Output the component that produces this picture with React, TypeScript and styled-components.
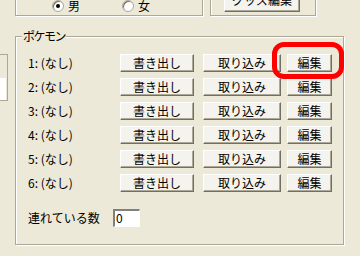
import React from "react";
import styled, { createGlobalStyle } from "styled-components";

const Global = createGlobalStyle`
  html, body { margin: 0; padding: 0; background: #ece9d8; }
  body { font-family: "Noto Sans CJK JP", "MS UI Gothic", sans-serif; font-size: 12px; color: #000; }
  * { box-sizing: border-box; }
`;

const Stage = styled.div`
  position: relative;
  width: 360px;
  height: 256px;
  overflow: hidden;
  background: #ece9d8;
`;

const etched = `
  border: 1px solid #aca899;
  box-shadow: inset 1px 1px 0 #fff, 1px 1px 0 #fff;
`;

const TopRow = styled.div`
  display: flex;
  margin-top: -21px;
  padding-left: 15px;
  gap: 7px;
`;

const TopBox = styled.div<{ $w: number; $pl: number }>`
  ${etched}
  width: ${(p) => p.$w}px;
  height: 37px;
  display: flex;
  align-items: flex-end;
  padding: 0 0 3px ${(p) => p.$pl}px;
`;

const RadioItem = styled.label<{ $ml?: number }>`
  display: flex;
  align-items: center;
  height: 12px;
  margin-left: ${(p) => p.$ml ?? 0}px;
  line-height: 12px;
`;

const RadioCircle = styled.span<{ $on?: boolean }>`
  position: relative;
  width: 12px;
  height: 12px;
  border-radius: 50%;
  background: #fff;
  border: 1px solid #aca899;
  box-shadow: inset 1px 1px 0 #716f64;
  margin-right: 4px;
  &::after {
    content: "";
    display: ${(p) => (p.$on ? "block" : "none")};
    position: absolute;
    left: 3px;
    top: 3px;
    width: 4px;
    height: 4px;
    border-radius: 50%;
    background: #000;
  }
`;

const Button = styled.button<{ $w: number; $h?: number; $ml?: number }>`
  width: ${(p) => p.$w}px;
  height: ${(p) => p.$h ?? 18}px;
  margin: 0 0 0 ${(p) => p.$ml ?? 0}px;
  padding: 0;
  background: #f4f3ee;
  border-top: 1px solid #fff;
  border-left: 1px solid #fff;
  border-right: 1px solid #716f64;
  border-bottom: 1px solid #716f64;
  box-shadow: inset -1px -1px 0 #aca899;
  font-family: inherit;
  font-size: 12px;
  line-height: 14px;
  color: #000;
  display: flex;
  align-items: center;
  justify-content: center;
`;

const MainRow = styled.div`
  display: flex;
  margin-top: 20px;
  gap: 7px;
`;

const Stub = styled.div`
  margin-top: 18px;
  width: 8px;
  height: 47px;
  border-top: 1px solid #aca899;
  border-right: 1px solid #aca899;
  border-bottom: 1px solid #aca899;
  display: flex;
  flex-direction: column;
  justify-content: flex-end;
`;

const StubWhite = styled.div`
  height: 22px;
  background: #fff;
  margin-right: 1px;
`;

const Group = styled.div`
  ${etched}
  position: relative;
  width: 329px;
  height: 209px;
  padding: 17px 0 0 12px;
  display: flex;
  flex-direction: column;
`;

const Legend = styled.span`
  position: absolute;
  top: -8px;
  left: 6px;
  padding: 0 1px;
  background: #ece9d8;
  line-height: 14px;
  letter-spacing: -1.5px;
`;

const Rows = styled.div`
  display: flex;
  flex-direction: column;
  gap: 6px;
`;

const Row = styled.div`
  display: flex;
  align-items: center;
  height: 18px;
`;

const Label = styled.span<{ $w: number }>`
  width: ${(p) => p.$w}px;
  line-height: 14px;
  white-space: nowrap;
`;

const CountRow = styled(Row)`
  margin-top: 17px;
`;

const NumInput = styled.div`
  width: 27px;
  height: 18px;
  background: #fff;
  border-top: 2px solid #808080;
  border-left: 2px solid #808080;
  border-right: 1px solid #fff;
  border-bottom: 1px solid #fff;
  box-shadow: 0 0 0 0 transparent;
  padding-left: 1px;
  line-height: 14px;
  font-size: 12px;
`;

const Highlight = styled.div`
  position: absolute;
  left: 272px;
  top: 42px;
  width: 72px;
  height: 37px;
  border: 5px solid #ff0000;
  border-radius: 12px;
  pointer-events: none;
`;

export default function App() {
  const rows = [1, 2, 3, 4, 5, 6];
  return (
    <>
      <Global />
      <Stage>
        <TopRow>
          <TopBox $w={188} $pl={36}>
            <RadioItem>
              <RadioCircle $on />
              男
            </RadioItem>
            <RadioItem $ml={42}>
              <RadioCircle />
              女
            </RadioItem>
          </TopBox>
          <TopBox $w={106} $pl={13}>
            <Button $w={76} $h={24}>グッズ編集</Button>
          </TopBox>
        </TopRow>
        <MainRow>
          <Stub>
            <StubWhite />
          </Stub>
          <Group>
            <Legend>ポケモン</Legend>
            <Rows>
              {rows.map((n) => (
                <Row key={n}>
                  <Label $w={92}>{n}: (なし)</Label>
                  <Button $w={74}>書き出し</Button>
                  <Button $w={78} $ml={9}>取り込み</Button>
                  <Button $w={45} $ml={6}>編集</Button>
                </Row>
              ))}
            </Rows>
            <CountRow>
              <Label $w={85}>連れている数</Label>
              <NumInput>0</NumInput>
            </CountRow>
          </Group>
        </MainRow>
        <Highlight />
      </Stage>
    </>
  );
}
